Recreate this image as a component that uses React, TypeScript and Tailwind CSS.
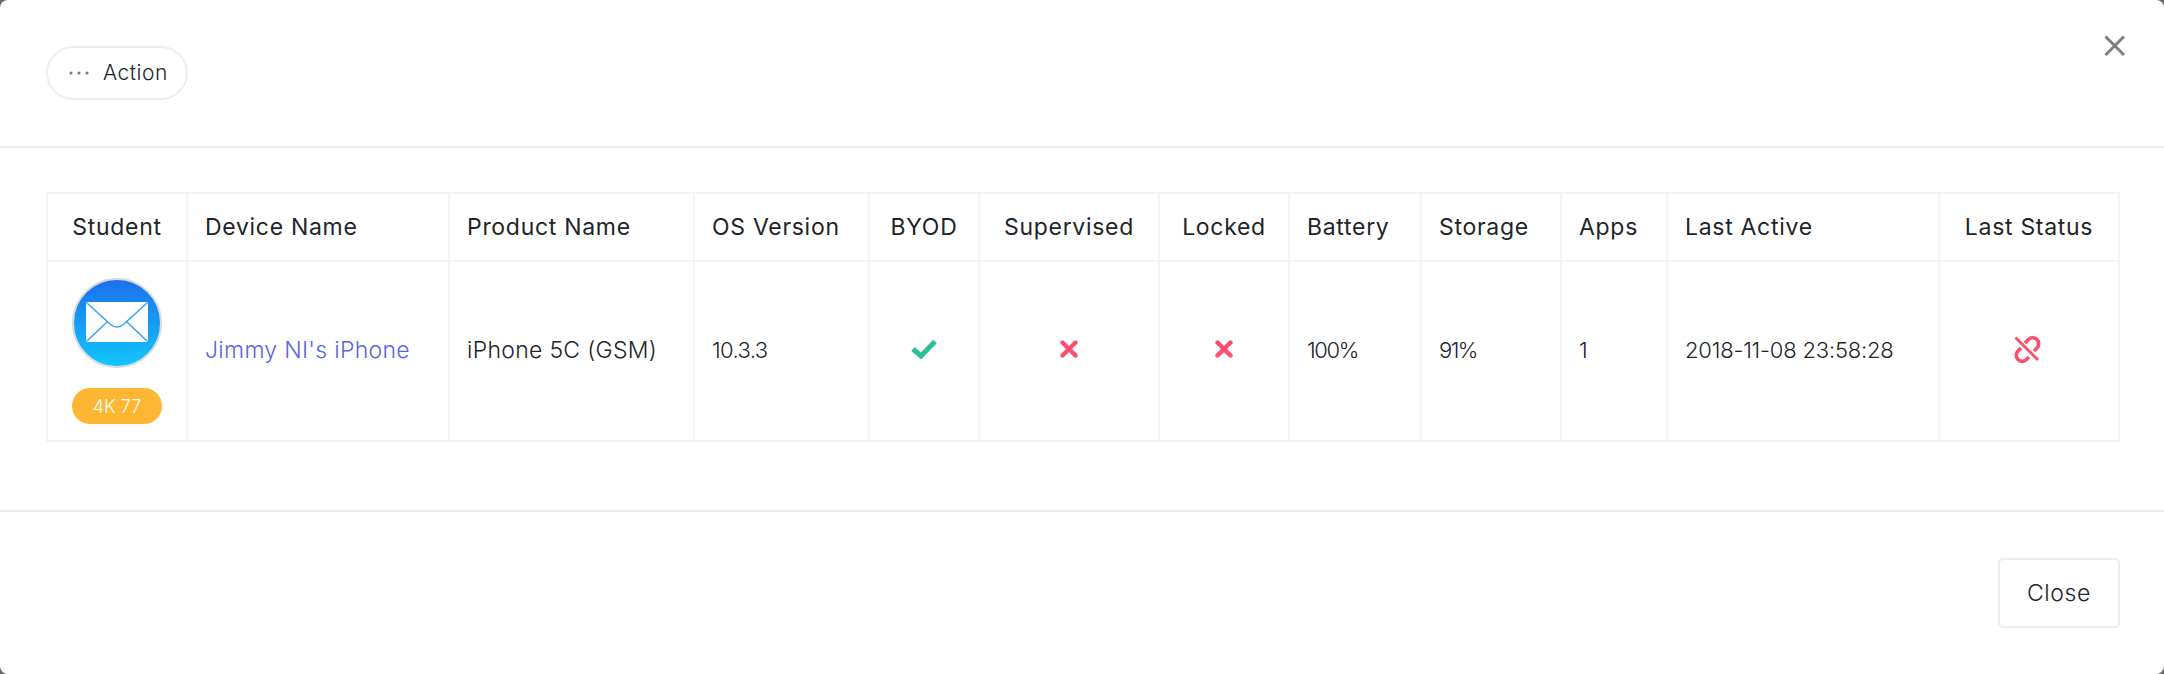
const headers = [
  { label: "Student", width: "w-[140px]", align: "text-center" },
  { label: "Device Name", width: "w-[262px]", align: "text-left" },
  { label: "Product Name", width: "w-[245px]", align: "text-left" },
  { label: "OS Version", width: "w-[175px]", align: "text-left" },
  { label: "BYOD", width: "w-[110px]", align: "text-center" },
  { label: "Supervised", width: "w-[180px]", align: "text-center" },
  { label: "Locked", width: "w-[130px]", align: "text-center" },
  { label: "Battery", width: "w-[132px]", align: "text-left" },
  { label: "Storage", width: "w-[140px]", align: "text-left" },
  { label: "Apps", width: "w-[106px]", align: "text-left" },
  { label: "Last Active", width: "w-[272px]", align: "text-left" },
  { label: "Last Status", width: "w-[180px]", align: "text-center" },
];

function MailIcon() {
  return (
    <svg width="90" height="90" viewBox="0 0 90 90" className="mx-auto block">
      <defs>
        <linearGradient id="mailBg" x1="0" y1="0" x2="0" y2="1">
          <stop offset="0" stopColor="#1b6fee" />
          <stop offset="1" stopColor="#12c8fd" />
        </linearGradient>
      </defs>
      <circle cx="45" cy="45" r="44" fill="url(#mailBg)" stroke="#d9dadc" strokeWidth="2" />
      <rect x="14" y="24" width="62" height="40" rx="2" fill="#fff" />
      <path
        d="M15 25 L38 46 Q45 52 52 46 L75 25 M15 63 L35 44 M75 63 L55 44"
        fill="none"
        stroke="#3aa5f3"
        strokeWidth="1.6"
      />
    </svg>
  );
}

function CheckMark() {
  return (
    <svg width="26" height="20" viewBox="0 0 26 20" className="mx-auto mb-[4px] block">
      <path d="M2 10 L10 17 L24 2.5" fill="none" stroke="#2bbf9d" strokeWidth="5" strokeLinejoin="miter" />
    </svg>
  );
}

function CrossMark() {
  return (
    <svg width="18" height="18" viewBox="0 0 18 18" className="mx-auto mb-[4px] block">
      <path d="M2.5 2.5 L15.5 15.5 M15.5 2.5 L2.5 15.5" fill="none" stroke="#fd4f6b" strokeWidth="4.4" strokeLinecap="round" />
    </svg>
  );
}

function UnlinkMark() {
  return (
    <svg width="28" height="28" viewBox="0 0 28 28" className="relative right-[2px] mx-auto mb-[4px] block">
      <path d="M2.5 2.5 L25 25" fill="none" stroke="#fd4f6b" strokeWidth="3" />
      <path
        d="M8 13 L5 16 A6 6 0 0 0 13.5 24.5 L16 22 M12 8 L15.5 4.5 A6 6 0 0 1 24 13 L21 16"
        fill="none"
        stroke="#fd4f6b"
        strokeWidth="3.6"
        strokeLinecap="butt"
      />
    </svg>
  );
}

const cell = "border-2 border-[#f4f5f9] px-[17px] align-middle";

export default function App() {
  return (
    <div className="h-[674px] w-[2164px] bg-[#6b6b6b] font-['Inter','Open_Sans',sans-serif] text-[#212529]">
      <div className="relative flex h-full flex-col overflow-hidden rounded-lg bg-white">
        <div className="flex h-[148px] items-start border-b-2 border-[#ebedf2] px-[46px] pt-[46px]">
          <button className="flex h-[54px] w-[142px] items-center gap-[14px] rounded-full border-2 border-[#ebedf2] pl-[21px] text-[21px] font-light tracking-[0.5px]">
            <svg width="20" height="6" viewBox="0 0 20 6" className="block">
              <circle cx="2" cy="3" r="1.5" fill="#74788d" />
              <circle cx="10" cy="3" r="1.5" fill="#74788d" />
              <circle cx="18" cy="3" r="1.5" fill="#74788d" />
            </svg>
            <span>Action</span>
          </button>
        </div>
        <button className="absolute right-[37px] top-[34px] text-[#7f7f7f]">
          <svg width="24" height="24" viewBox="0 0 24 24">
            <path d="M2.5 2.5 L21 21 M21 2.5 L2.5 21" fill="none" stroke="currentColor" strokeWidth="3" />
          </svg>
        </button>
        <div className="h-[364px] border-b-2 border-[#ebedf2] px-[46px] pt-[44px]">
          <table className="w-[2072px] table-fixed border-collapse text-[23px] tracking-[0.7px]">
            <thead>
              <tr className="h-[68px]">
                {headers.map((h) => (
                  <th key={h.label} className={`${cell} ${h.width} ${h.align} whitespace-nowrap font-normal`}>
                    {h.label}
                  </th>
                ))}
              </tr>
            </thead>
            <tbody className="font-light">
              <tr className="h-[180px]">
                <td className={cell}>
                  <MailIcon />
                  <div className="mx-auto mt-[20px] flex h-[36px] w-[90px] items-center justify-center rounded-full bg-[#ffb733] text-[18px] tracking-normal text-white">
                    4K 77
                  </div>
                </td>
                <td className={`${cell} whitespace-nowrap pb-[2px] tracking-[0.3px] text-[#5867dd]`}>Jimmy NI's iPhone</td>
                <td className={`${cell} whitespace-nowrap pb-[2px] tracking-[0.3px]`}>iPhone 5C (GSM)</td>
                <td className={`${cell} pb-[2px] text-[22px] tracking-[-0.6px]`}>10.3.3</td>
                <td className={cell}><CheckMark /></td>
                <td className={cell}><CrossMark /></td>
                <td className={cell}><CrossMark /></td>
                <td className={`${cell} pb-[2px] text-[22px] tracking-[-1.4px]`}>100%</td>
                <td className={`${cell} pb-[2px] text-[22px] tracking-[-1.6px]`}>91%</td>
                <td className={`${cell} pb-[2px] text-[22px]`}>1</td>
                <td className={`${cell} whitespace-nowrap pb-[2px] text-[22px] tracking-[-0.2px]`}>2018-11-08 23:58:28</td>
                <td className={cell}><UnlinkMark /></td>
              </tr>
            </tbody>
          </table>
        </div>
        <div className="flex flex-1 items-start justify-end px-[44px] pt-[46px]">
          <button className="h-[70px] w-[122px] rounded-[5px] border-2 border-[#ebedf2] text-[23px] font-light tracking-[0.6px]">
            Close
          </button>
        </div>
      </div>
    </div>
  );
}
